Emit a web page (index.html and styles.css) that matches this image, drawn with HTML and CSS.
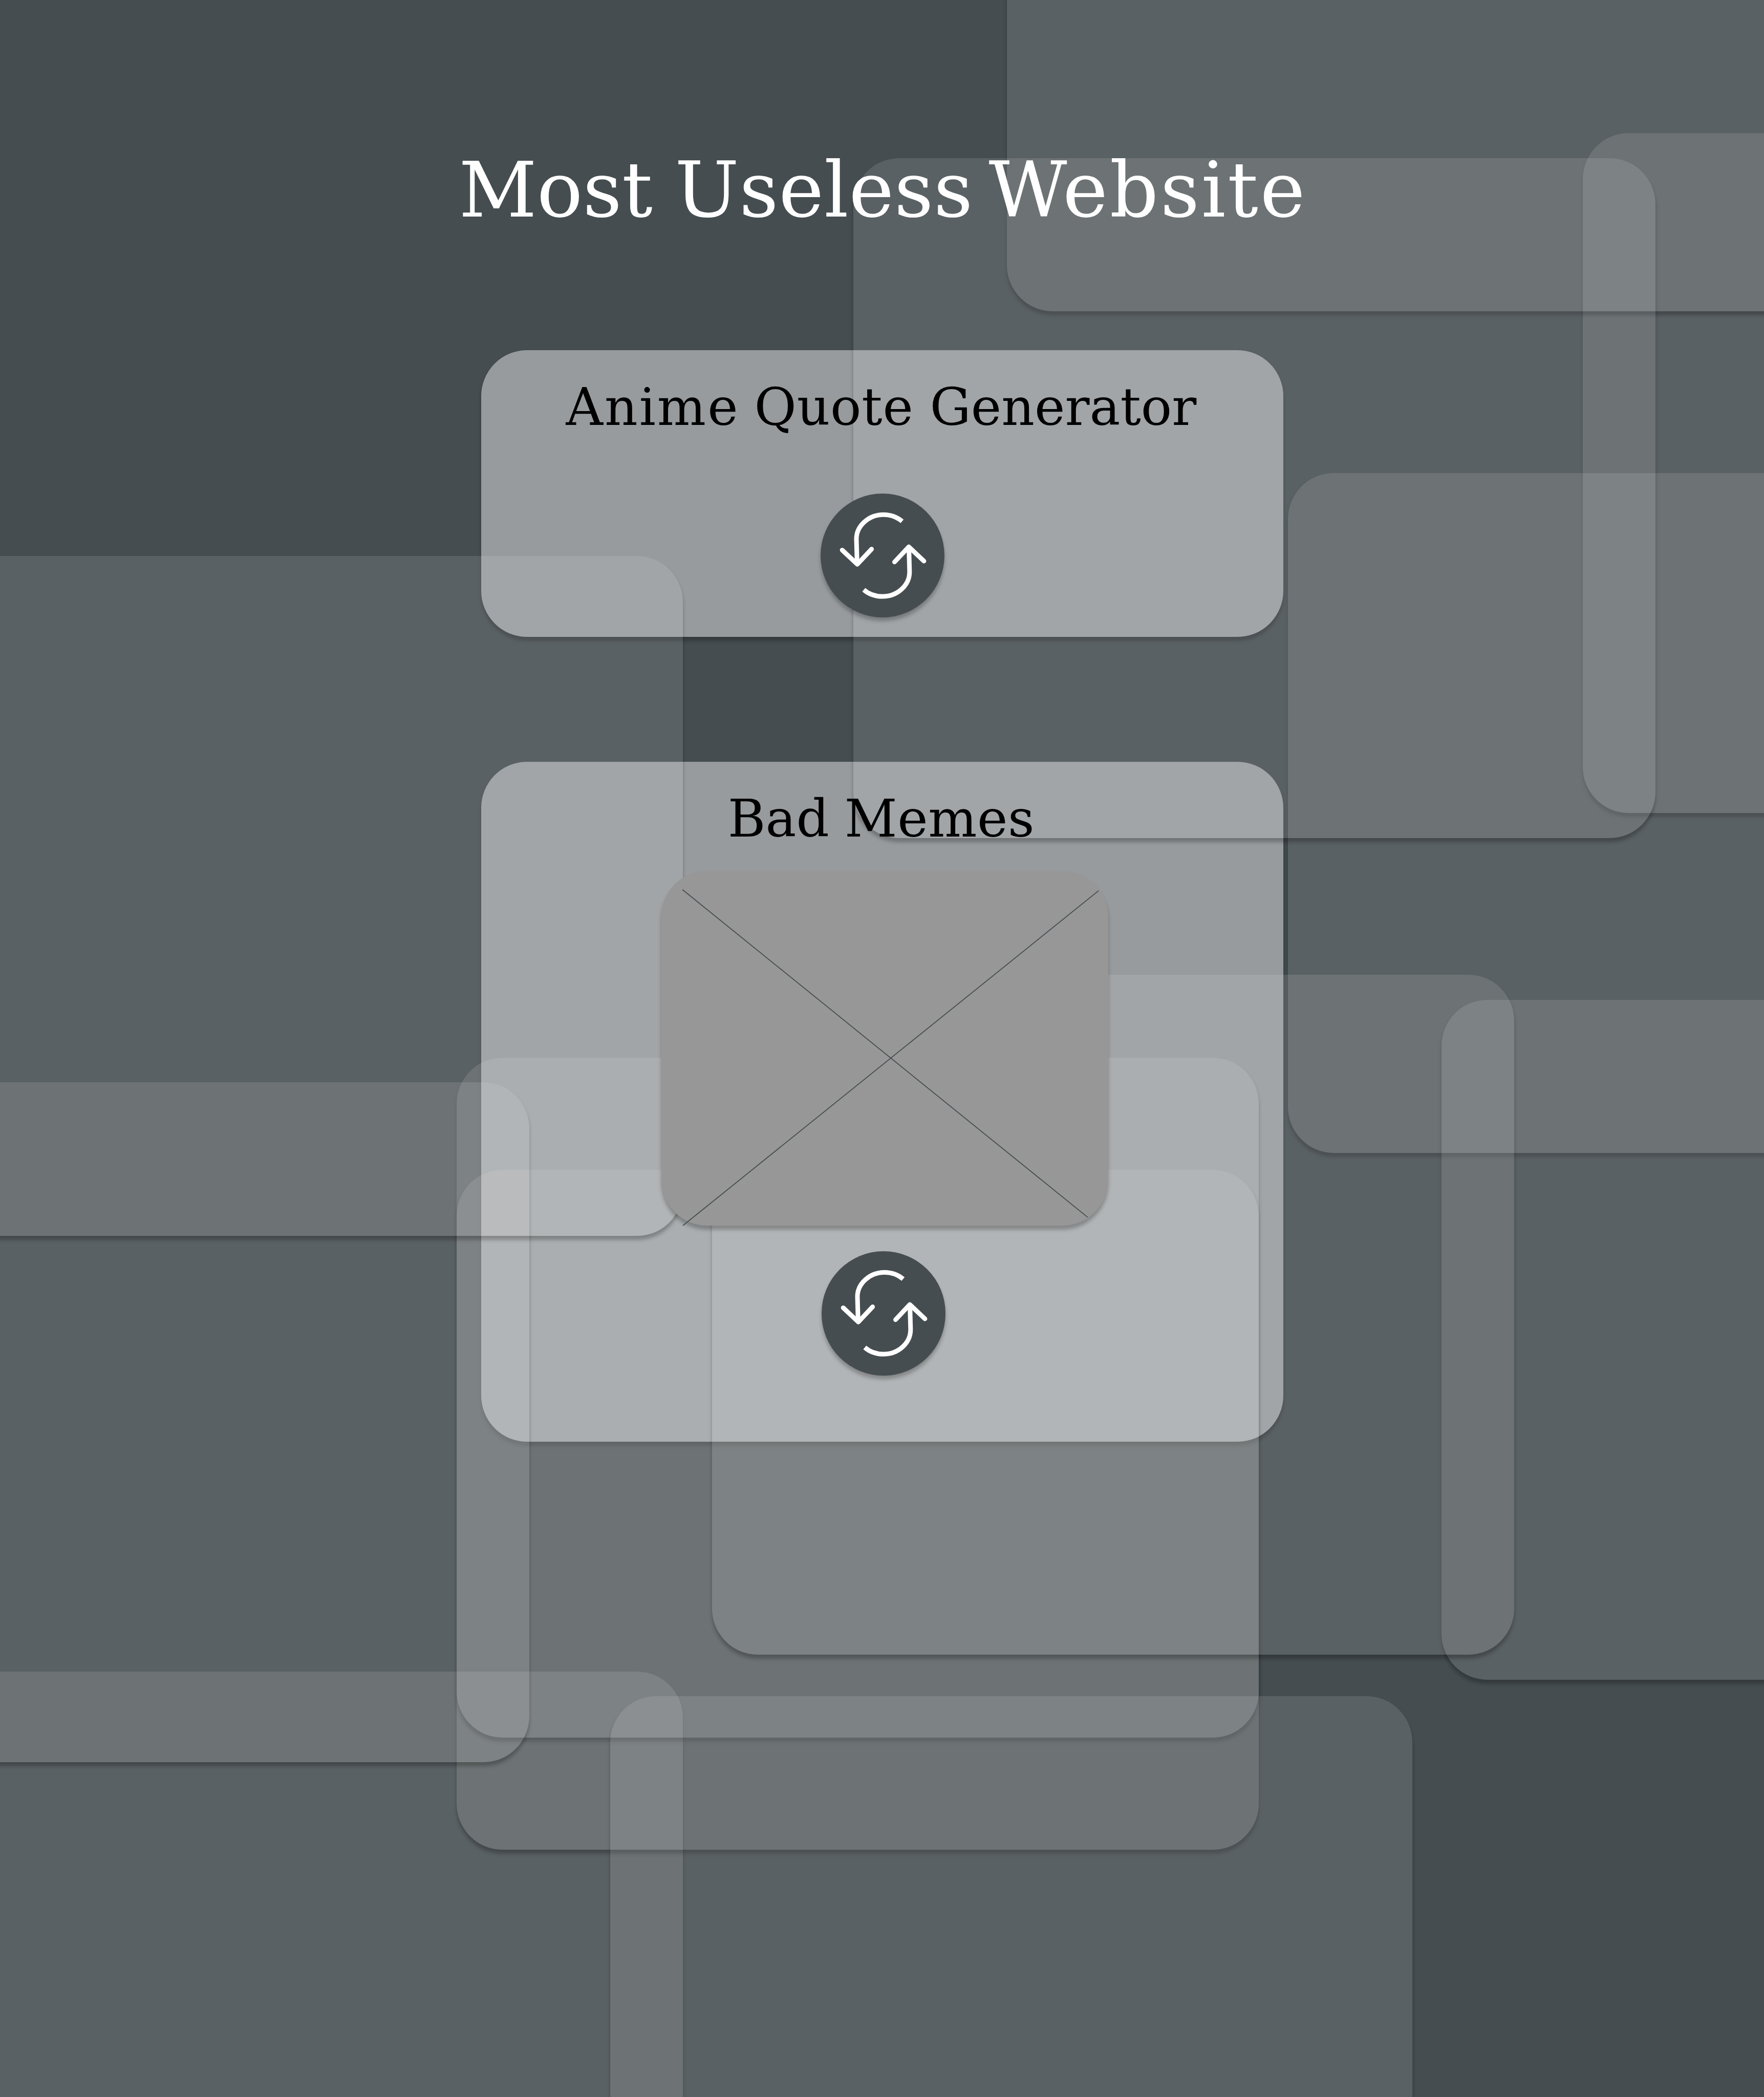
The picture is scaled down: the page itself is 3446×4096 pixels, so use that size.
FILE: index.html
```html
<!DOCTYPE html>
<html lang="en">
<head>
<meta charset="utf-8">
<title>Most Useless Website</title>
<link rel="stylesheet" href="styles.css">
</head>
<body>
<div class="page">
  <div class="backdrop" aria-hidden="true">
    <i class="pane pane-c"></i>
    <i class="pane pane-a"></i>
    <i class="pane pane-k"></i>
    <i class="pane pane-i"></i>
    <i class="pane pane-j"></i>
    <i class="pane pane-l"></i>
    <i class="pane pane-d"></i>
    <i class="pane pane-b"></i>
    <i class="pane pane-f"></i>
    <i class="pane pane-e"></i>
    <i class="pane pane-h"></i>
    <i class="pane pane-g"></i>
  </div>
  <main class="content">
    <h1 class="title">Most <span class="word-useless">Useless</span> <span class="word-website">Website</span></h1>
    <section class="card card-quote">
      <h2 class="heading"><span class="word-anime">Anime</span> <span class="word-quote">Quote</span> Generator</h2>
      <button class="refresh" aria-label="New quote">
        <svg class="refresh-icon" viewBox="0 0 270 270"><g fill="none" stroke="#fff" stroke-width="10"><path d="M177.5 60.5C166 51 152 46 137 46C105 46 78 70 78 99L79.500 152"/><path d="M47 123L80 154L111 121" stroke-linecap="round" stroke-linejoin="round"/><path d="M94 209.500C105 219 119 224 134.500 224C167 224 194 200 193.700 170L192.300 118"/><path d="M161 149L192 116L225 147" stroke-linecap="round" stroke-linejoin="round"/></g></svg>
      </button>
    </section>
    <section class="card card-memes">
      <h2 class="heading">Bad <span class="word-memes">Memes</span></h2>
      <div class="meme">
        <svg class="meme-cross" viewBox="0 0 972 772"><path d="M46 41L928 754M47 772L952 43" fill="none" stroke="#454d50" stroke-width="2"/></svg>
      </div>
      <button class="refresh refresh-meme" aria-label="New meme">
        <svg class="refresh-icon" viewBox="0 0 270 270"><g fill="none" stroke="#fff" stroke-width="10"><path d="M177.5 60.5C166 51 152 46 137 46C105 46 78 70 78 99L79.500 152"/><path d="M47 123L80 154L111 121" stroke-linecap="round" stroke-linejoin="round"/><path d="M94 209.500C105 219 119 224 134.500 224C167 224 194 200 193.700 170L192.300 118"/><path d="M161 149L192 116L225 147" stroke-linecap="round" stroke-linejoin="round"/></g></svg>
      </button>
    </section>
  </main>
</div>
</body>
</html>
```
FILE: styles.css
```css
:root {
  --u: calc(3446px / 3840);
  --shadow: 0 calc(8 * var(--u)) calc(8 * var(--u)) rgba(0, 0, 0, 0.25);
}

* { box-sizing: border-box; }

html, body { margin: 0; }

.page {
  position: relative;
  width: 3446px;
  height: 4096px;
  overflow: hidden;
  background: #454d50;
  font-family: "DejaVu Serif", serif;
}

/* Free-floating translucent panes: over the cards, under their contents */
.backdrop { position: absolute; inset: 0; z-index: 1; pointer-events: none; }

.pane {
  position: absolute;
  left: calc(var(--x) * var(--u));
  top: calc(var(--y) * var(--u));
  width: calc(1746 * var(--u));
  height: calc(1480 * var(--u));
  border-radius: calc(100 * var(--u));
  background: rgba(229, 229, 229, 0.135);
  box-shadow: var(--shadow);
}

.pane-a { --x: 2192; --y: -802; }
.pane-b { --x: 1858; --y: 344; }
.pane-c { --x: 3446; --y: 290; }
.pane-d { --x: 2804; --y: 1030; }
.pane-e { --x: 1550; --y: 2122; }
.pane-f { --x: 3138; --y: 2176; }
.pane-g { --x: -260; --y: 1210; }
.pane-h { --x: -594; --y: 2356; }
.pane-i { --x: 994; --y: 2302; }
.pane-j { --x: 994; --y: 2546; }
.pane-k { --x: -260; --y: 3638; }
.pane-l { --x: 1328; --y: 3692; }

.content {
  display: flex;
  flex-direction: column;
  align-items: center;
  padding: calc(314 * var(--u)) 0 0 calc(2 * var(--u));
}

.title, .heading, .meme, .refresh { position: relative; z-index: 2; }

.title {
  margin: 0 calc(2 * var(--u)) 0 0;
  height: calc(448 * var(--u));
  font-weight: 400;
  font-size: calc(166 * var(--u));
  line-height: calc(200 * var(--u));
  color: #fff;
  white-space: nowrap;
}

.word-useless { margin-left: -4px; letter-spacing: 0.6px; }
.word-website { margin: 0 -3.6px 0 -17px; letter-spacing: 3.6px; }

.card {
  display: flex;
  flex-direction: column;
  align-items: center;
  width: calc(1746 * var(--u));
  padding-top: calc(50 * var(--u));
  border-radius: calc(100 * var(--u));
  background: rgba(217, 218, 220, 0.555);
  box-shadow: var(--shadow);
}

.card-quote { height: calc(624 * var(--u)); margin-bottom: calc(272 * var(--u)); }
.card-memes { height: calc(1480 * var(--u)); }

.heading {
  margin: 0 5px 0 0;
  font-weight: 400;
  font-size: calc(112 * var(--u));
  line-height: calc(150 * var(--u));
  color: #000;
  white-space: nowrap;
}

.word-anime { letter-spacing: 3px; margin-right: -3px; }
.word-quote { letter-spacing: 0.7px; }
.word-memes { margin-left: -2px; letter-spacing: 0.5px; }

.refresh {
  flex: none;
  width: calc(270 * var(--u));
  height: calc(270 * var(--u));
  margin: calc(112 * var(--u)) 0 0;
  padding: 0;
  border: 0;
  border-radius: 50%;
  background: #454d50;
  box-shadow: var(--shadow);
}

.refresh-meme { margin: calc(56 * var(--u)) 0 0 calc(4 * var(--u)); }

.refresh-icon, .meme-cross { display: block; width: 100%; height: 100%; overflow: visible; }

.meme {
  flex: none;
  width: calc(972 * var(--u));
  height: calc(772 * var(--u));
  margin: calc(38 * var(--u)) 0 0 calc(10 * var(--u));
  border-radius: calc(100 * var(--u));
  background: #979797;
  box-shadow: var(--shadow);
}
```
